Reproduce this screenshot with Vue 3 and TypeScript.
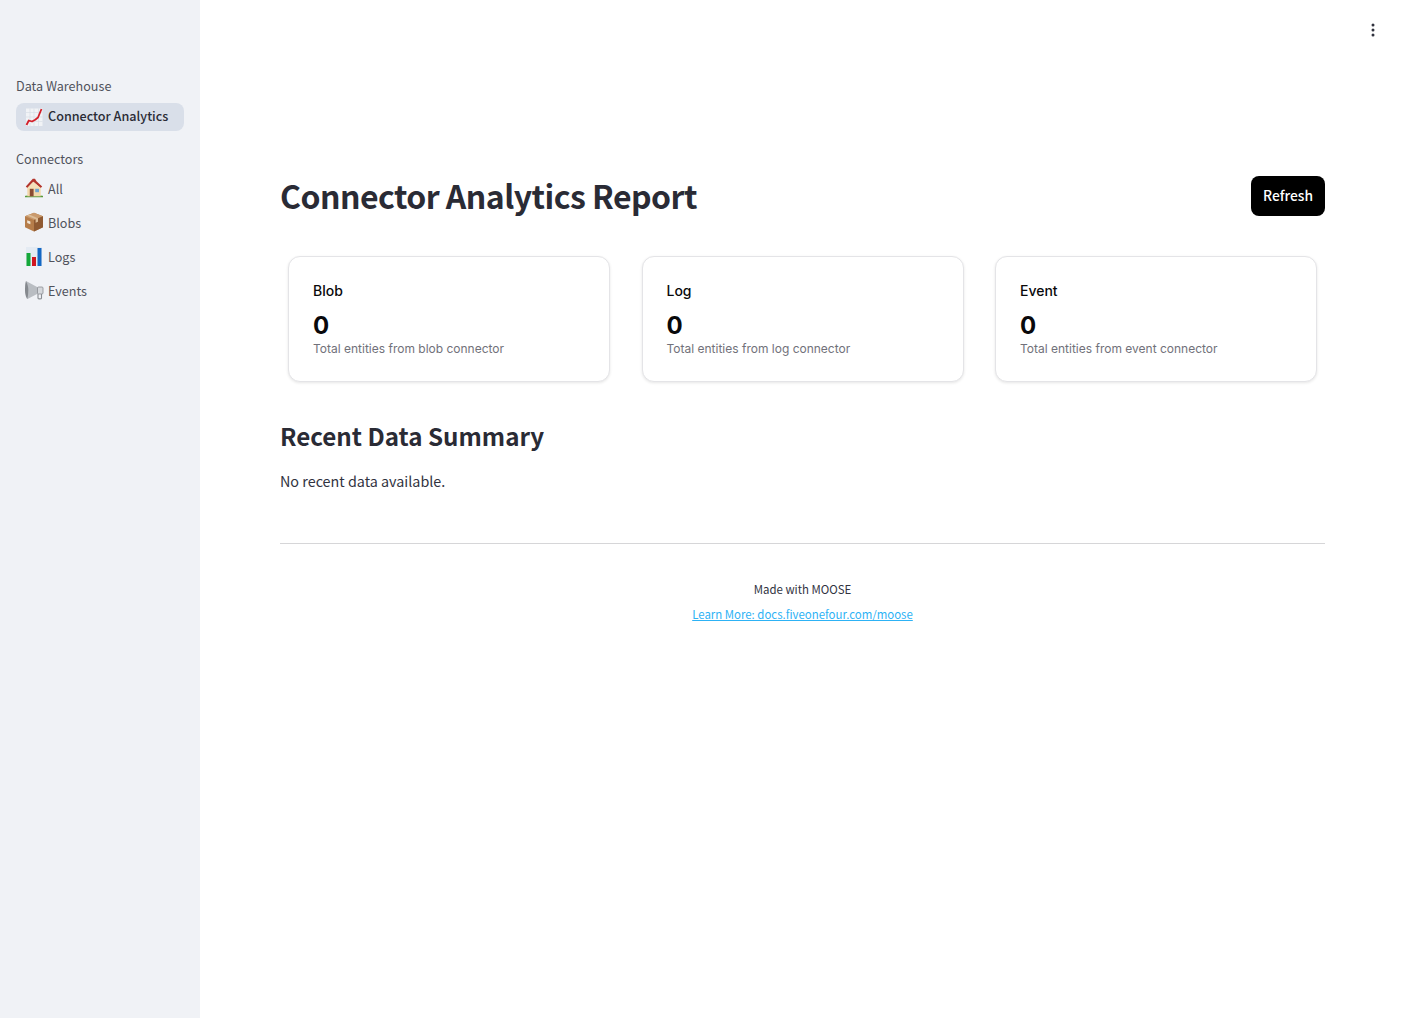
<script setup lang="ts">
interface Card { title: string; value: number; text: string }
const cards: Card[] = [
  { title: 'Blob', value: 0, text: 'Total entities from blob connector' },
  { title: 'Log', value: 0, text: 'Total entities from log connector' },
  { title: 'Event', value: 0, text: 'Total entities from event connector' },
]
</script>

<template>
  <div class="app">
    <aside class="sidebar">
      <div class="section-label first">Data Warehouse</div>
      <a class="nav-item active">
        <svg class="emoji" viewBox="0 0 20 20" aria-hidden="true">
          <rect x="2" y="1.500" width="16.500" height="17.500" fill="#f1f3f6" />
          <path d="M2 5.500h16.500M2 10h16.500M2 14.500h16.500M6 1.500V19M10 1.500V19M14.500 1.500V19" stroke="#d5dbe4" stroke-width=".6" fill="none" />
          <path d="M2.500 18 4.800 13.500l3.200 1 3.200-1.800 2.800-2.200 3.500-8.500" stroke="#d3202a" stroke-width="1.800" fill="none" stroke-linejoin="round" />
        </svg>
        <span>Connector Analytics</span>
      </a>
      <div class="section-label second">Connectors</div>
      <a class="nav-item">
        <svg class="emoji" viewBox="0 0 20 20" aria-hidden="true">
          <path d="M1 18c1.500-1 16.500-1 18 0v1.300H1z" fill="#5a9a3c" />
          <path d="M3.300 7.500h13.400v10.800H3.300z" fill="#f3d8ab" />
          <path d="M8.800 .8 1.800 8.500l1.500 1.500 6-6.200 7.400 6.200 1.500-1.500L12.500 3.300 11 .8z" fill="#b3352d" />
          <path d="M9.300 3.800 3.300 10v.5h13.400V10z" fill="#f5dfb9" />
          <rect x="5.800" y="10.800" width="3.800" height="7.500" fill="#8a4b32" />
          <rect x="11.200" y="10.800" width="3.800" height="3.400" fill="#6fa4cf" />
        </svg>
        <span>All</span>
      </a>
      <a class="nav-item">
        <svg class="emoji" viewBox="0 0 20 20" aria-hidden="true">
          <path d="M10 .8 19 4.300v11L10 19.500 1 15.300v-11z" fill="#b67d4a" />
          <path d="M10 .8 19 4.300 10 8 1 4.300z" fill="#c99a6d" />
          <path d="M10 8v11.500l9-4.200v-11z" fill="#8f5a32" />
          <path d="M5.200 2.500 14 6.200v3.500l-2.400 1V7.200L2.900 3.400z" fill="#dcbc96" />
          <path d="M3.200 8.300l3.200 1.300v2.700l-3.200-1.300z" fill="#f1e6d6" />
        </svg>
        <span>Blobs</span>
      </a>
      <a class="nav-item">
        <svg class="emoji" viewBox="0 0 20 20" aria-hidden="true">
          <rect x="2" y="1" width="16" height="19" fill="#e4ebf3" />
          <rect x="2.500" y="7" width="4" height="13" fill="#15a83a" />
          <rect x="8" y="11" width="4" height="9" fill="#d0161f" />
          <rect x="13.500" y="2" width="4" height="18" fill="#1468c4" />
        </svg>
        <span>Logs</span>
      </a>
      <a class="nav-item">
        <svg class="emoji" viewBox="0 0 20 20" aria-hidden="true">
          <path d="M2 1 14 7.500v6L3.500 19z" fill="#b9bdc2" />
          <path d="M2 1c1.500 3 2.300 6 2.300 9s-.3 6-.8 9C1.800 17.800 1 13.500 1 10s.2-7.200 1-9z" fill="#85898e" />
          <rect x="13.500" y="7" width="5.500" height="7" rx="1" fill="#d5d8dc" stroke="#8a8e93" stroke-width=".8" />
          <path d="M14 14v4.300c0 1 3.500 1 3.500 0V14" fill="none" stroke="#8a8e93" stroke-width="1.100" />
        </svg>
        <span>Events</span>
      </a>
    </aside>

    <main class="main">
      <button class="menu" type="button" aria-label="Menu">
        <svg width="16" height="16" viewBox="0 0 16 16" aria-hidden="true">
          <circle cx="8" cy="3" r="1.500" fill="#31333f" />
          <circle cx="8" cy="8" r="1.500" fill="#31333f" />
          <circle cx="8" cy="13" r="1.500" fill="#31333f" />
        </svg>
      </button>

      <div class="content">
        <header class="report-head">
          <h1>Connector Analytics Report</h1>
          <button class="refresh" type="button">Refresh</button>
        </header>

        <section class="cards">
          <article v-for="c in cards" :key="c.title" class="card">
            <div class="card-title">{{ c.title }}</div>
            <div class="card-value">{{ c.value }}</div>
            <div class="card-text">{{ c.text }}</div>
          </article>
        </section>

        <h2>Recent Data Summary</h2>
        <p class="empty">No recent data available.</p>
        <hr class="rule" />
        <footer class="foot">
          <div>Made with MOOSE</div>
          <a href="#">Learn More: docs.fiveonefour.com/moose</a>
        </footer>
      </div>
    </main>
  </div>
</template>

<style>
html, body { margin: 0; background: #fff; }
</style>

<style scoped>
.app {
  display: flex;
  min-height: 1018px;
  font-family: "Noto Sans CJK SC", "Noto Sans", sans-serif;
  color: #2a2b35;
}
.sidebar {
  width: 200px;
  flex: none;
  box-sizing: border-box;
  background: #f0f2f6;
  padding: 74px 16px 0;
}
.section-label {
  font-size: 12.6px;
  line-height: 24px;
  color: #50525c;
}
.second { margin-top: 16px; }
.nav-item {
  display: flex;
  align-items: center;
  gap: 4px;
  height: 28px;
  margin-top: 6px;
  padding: 0 8px;
  border-radius: 8px;
  font-size: 12.6px;
  color: #50525c;
  white-space: nowrap;
}
.first + .nav-item { margin-top: 5px; }
.second + .nav-item { margin-top: 3px; }
.active {
  background: #d9dfe9;
  color: #2a2b35;
  font-weight: 500;
}
.active span { margin-bottom: 4px; }
.emoji { width: 20px; height: 20px; flex: none; }
.main {
  flex: 1;
  position: relative;
  min-width: 0;
  padding: 176px 80px 0;
}
.menu {
  position: absolute;
  top: 22px;
  right: 24px;
  padding: 0;
  border: 0;
  background: none;
  display: flex;
}
.report-head {
  display: flex;
  justify-content: space-between;
  align-items: flex-start;
}
h1 {
  margin: 0;
  font-size: 32px;
  line-height: 38px;
  letter-spacing: -0.54px;
  font-weight: 700;
}
.refresh {
  width: 74px;
  height: 40px;
  border: 0;
  border-radius: 8px;
  background: #000;
  color: #fff;
  font: 500 13.8px/1 "Noto Sans CJK SC", "Noto Sans", sans-serif;
  padding: 0;
}
.cards {
  display: grid;
  grid-template-columns: repeat(3, 322px);
  justify-content: space-between;
  padding: 0 8px;
  margin-top: 40px;
}
.card {
  box-sizing: border-box;
  height: 126px;
  padding: 24px 24px 0;
  border: 1px solid #e4e4e7;
  border-radius: 12px;
  background: #fff;
  box-shadow: 0 1px 3px rgba(0, 0, 0, 0.1);
  font-family: Inter, "Liberation Sans", sans-serif;
}
.card-title {
  font-size: 14px;
  line-height: 20px;
  font-weight: 500;
  color: #09090b;
}
.card-value {
  margin-top: 11px;
  font-size: 24px;
  line-height: 28px;
  font-weight: 700;
  color: #09090b;
}
.card-text {
  font-size: 12px;
  line-height: 16px;
  color: #71717a;
  margin-top: 1px;
}
h2 {
  margin: 34px 0 0;
  font-size: 24.200px;
  line-height: 40px;
  font-weight: 700;
}
.empty {
  margin: 13px 0 0;
  font-size: 14.350px;
  line-height: 24px;
  color: #31333f;
}
.rule {
  margin: 50px 0 0;
  border: 0;
  border-top: 1px solid #d6d6d8;
}
.foot {
  margin-top: 34px;
  text-align: center;
  font-size: 11.430px;
  line-height: 22px;
  color: #31333f;
}
.foot a {
  display: block;
  margin-top: 3px;
  color: #2db2f5;
  text-decoration: underline;
}
</style>
